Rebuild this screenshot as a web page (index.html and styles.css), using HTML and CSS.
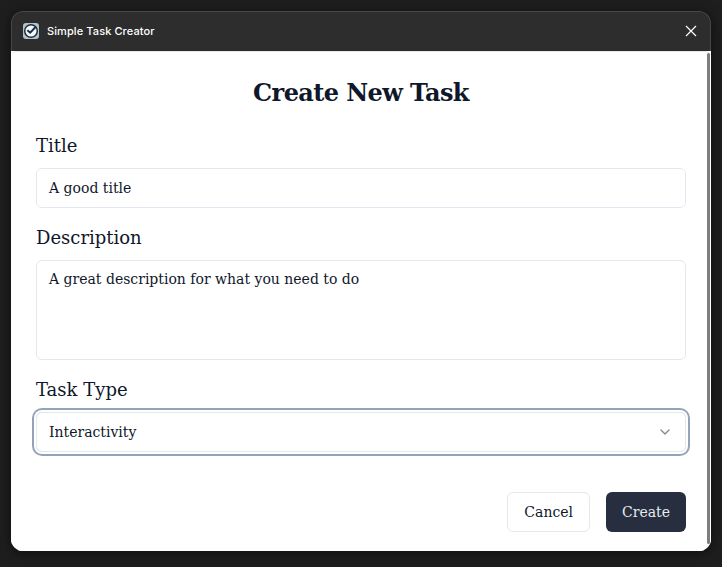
FILE: index.html
```html
<!DOCTYPE html>
<html lang="en">
<head>
<meta charset="utf-8">
<title>Simple Task Creator</title>
<link rel="stylesheet" href="styles.css">
</head>
<body>
<main class="window">
  <header class="titlebar">
    <svg class="app-icon" viewBox="0 0 16 16" width="16" height="16">
      <rect width="16" height="16" rx="3" fill="#b4c4cf"/>
      <circle cx="8" cy="8" r="6.3" fill="#f4f8fb" stroke="#1e2f3f" stroke-width="1.5"/>
      <path d="M4.4 7.2 7.2 9.7 12.6 4" fill="none" stroke="#1e2f3f" stroke-width="2"/>
    </svg>
    <span class="app-name">Simple Task Creator</span>
    <svg class="close" viewBox="0 0 12 12" width="12" height="12">
      <path d="M1 1 11 11M11 1 1 11" fill="none" stroke="#fff" stroke-width="1.2"/>
    </svg>
  </header>
  <form class="content">
    <h1>Create New Task</h1>
    <div class="field">
      <label class="label">Title</label>
      <div class="control">A good title</div>
    </div>
    <div class="field">
      <label class="label">Description</label>
      <div class="control control-area">A great description for what you need to do</div>
    </div>
    <div class="field">
      <label class="label">Task Type</label>
      <div class="control control-select">
        <span>Interactivity</span>
        <svg class="chevron" viewBox="0 0 24 24" width="16" height="16">
          <path d="m6 9 6 6 6-6" fill="none" stroke="#858994" stroke-width="2" stroke-linecap="round" stroke-linejoin="round"/>
        </svg>
      </div>
    </div>
    <div class="actions">
      <div class="button">Cancel</div>
      <div class="button button-primary">Create</div>
    </div>
    <div class="scrollbar"></div>
  </form>
</main>
</body>
</html>
```
FILE: styles.css
```css
* {
  box-sizing: border-box;
}

body {
  margin: 0;
  height: 567px;
  padding: 11px;
  overflow: hidden;
  background: #1e1e1e;
  color: #0f172a;
  font-family: "DejaVu Serif", serif;
}

.window {
  width: 700px;
  height: 540px;
  border-radius: 12px;
  overflow: hidden;
  background: #2d2d2d;
  box-shadow: 0 2px 12px rgba(0, 0, 0, 0.55);
}

.titlebar {
  display: flex;
  align-items: center;
  height: 40px;
  padding: 0 14px 1px 12px;
  border: 1px solid #474747;
  border-width: 1px 1px 0;
  border-radius: 12px 12px 0 0;
  background: #2d2d2d;
}

.app-icon {
  margin-left: -1px;
}

.app-name {
  margin-left: 8px;
  color: #fff;
  font: 500 11px/16px Inter, sans-serif;
  letter-spacing: 0.1px;
}

.close {
  margin-left: auto;
  margin-right: -1px;
}

.content {
  position: relative;
  height: 500px;
  padding: 25px 25px 24px;
  border: 1px solid #e2e8f0;
  border-width: 1px 0 0;
  border-radius: 6px 6px 0 0;
  background: #fff;
  box-shadow: 0 0 0 8px #fff;
  clip-path: inset(0);
}

h1 {
  margin: 0 0 23px;
  font-size: 24px;
  line-height: 32px;
  letter-spacing: -0.6px;
  text-align: center;
}

.field {
  margin-bottom: 16px;
}

.label {
  display: block;
  margin-bottom: 8px;
  font-size: 18px;
  line-height: 28px;
}

.control {
  height: 40px;
  padding: 9px 12px;
  border: 1px solid #e2e8f0;
  border-radius: 6px;
  font-size: 14px;
  line-height: 20px;
}

.control-area {
  height: 100px;
  padding-top: 8px;
}

.control-select {
  display: flex;
  align-items: center;
  justify-content: space-between;
  box-shadow: 0 0 0 2px #fff, 0 0 0 4px #94a3b8;
}

.actions {
  display: flex;
  justify-content: flex-end;
  gap: 16px;
  margin-top: 40px;
}

.button {
  height: 40px;
  padding: 9px 16px;
  border: 1px solid #e2e8f0;
  border-radius: 6px;
  font-size: 14px;
  line-height: 20px;
}

.button-primary {
  padding: 10px 16px;
  border: 0;
  background: #272e3f;
  color: #e8ebef;
}

.scrollbar {
  position: absolute;
  top: 1px;
  right: 1px;
  width: 3px;
  height: 491px;
  border-radius: 2px;
  background: #7c7f7f;
}
```
